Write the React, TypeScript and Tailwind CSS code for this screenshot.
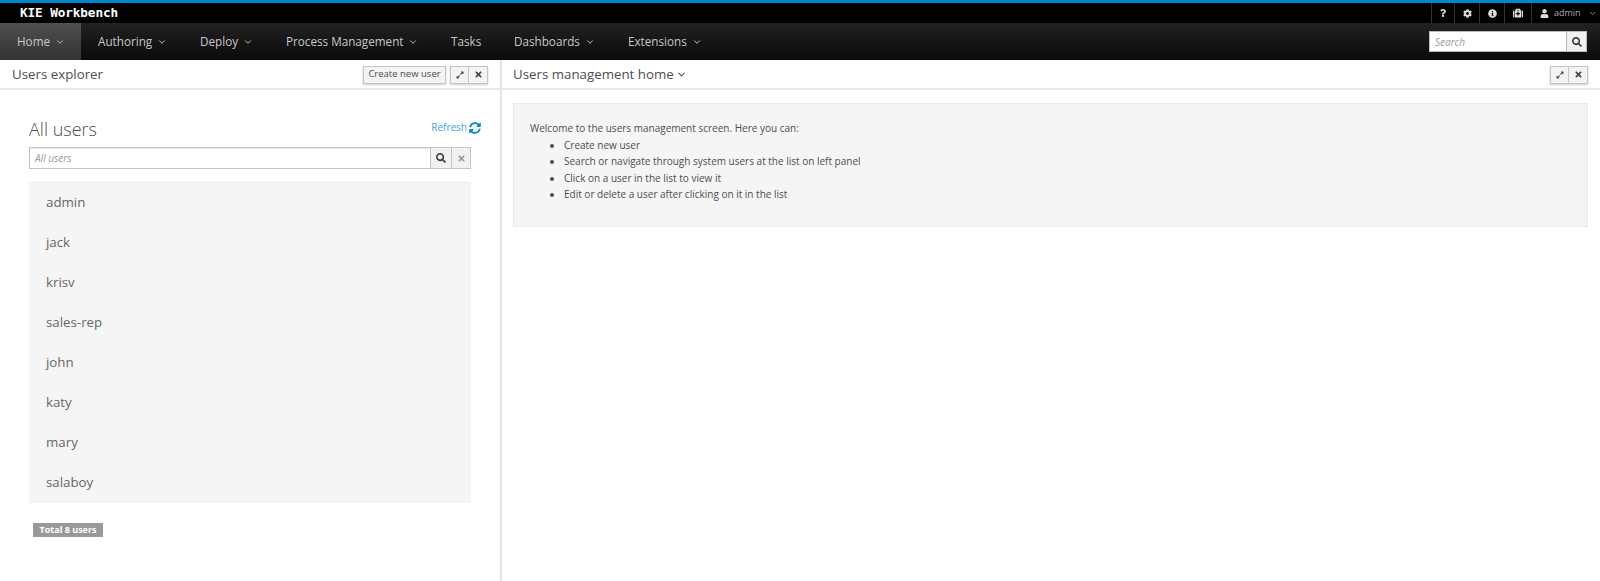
import { ChevronDown } from 'lucide-react';
import { FaCog, FaExpandAlt, FaInfoCircle, FaMedkit, FaQuestion, FaSearch, FaSyncAlt, FaTimes, FaUser } from 'react-icons/fa';

const navItems = [
  { label: 'Home', width: 'w-[81px]', active: true, caret: true },
  { label: 'Authoring', width: 'w-[102px]', caret: true },
  { label: 'Deploy', width: 'w-[86px]', caret: true },
  { label: 'Process Management', width: 'w-[165px]', caret: true },
  { label: 'Tasks', width: 'w-[63px]' },
  { label: 'Dashboards', width: 'w-[114px]', caret: true },
  { label: 'Extensions', width: 'w-[110px]', caret: true },
];

const users = ['admin', 'jack', 'krisv', 'sales-rep', 'john', 'katy', 'mary', 'salaboy'];

const PanelButtons = () => {
  return (
    <div className="flex h-[18px] border border-[#c4c4c4] bg-[#f3f3f3] shadow-[0_1px_2px_rgba(0,0,0,0.2)]">
      <div className="flex w-[18px] items-center justify-center border-r border-[#c4c4c4] text-[#444]">
        <FaExpandAlt className="text-[8px]" />
      </div>
      <div className="flex w-[18px] items-center justify-center text-[#444]">
        <FaTimes className="text-[9px]" />
      </div>
    </div>
  );
};

export default function App() {
  return (
    <div className="flex h-[581px] w-[1600px] flex-col overflow-hidden bg-white font-['Open_Sans',sans-serif] text-[#4d4d4d]">
      {/* Top utility bar */}
      <div className="flex h-[23px] items-center justify-between border-t-[3px] border-[#0088ce] bg-black">
        <span className="pl-5 font-['DejaVu_Sans_Mono',monospace] text-[12.7px] font-bold tracking-[-0.1px] text-white">KIE Workbench</span>
        <div className="flex h-full items-center text-[#ddd]">
          <div className="flex h-full w-[23px] items-center justify-center border-l border-[#333]">
            <FaQuestion className="text-[8px]" />
          </div>
          <div className="flex h-full w-[25px] items-center justify-center border-l border-[#333]">
            <FaCog className="text-[9px]" />
          </div>
          <div className="flex h-full w-[25px] items-center justify-center border-l border-[#333]">
            <FaInfoCircle className="text-[9px]" />
          </div>
          <div className="flex h-full w-[27px] items-center justify-center border-l border-[#333]">
            <FaMedkit className="text-[10px]" />
          </div>
          <div className="flex h-full w-[69px] items-center gap-[5px] border-l border-[#333] pl-[8px] text-[9px] text-[#aaa]">
            <FaUser className="text-[9px] text-[#ddd]" />
            <span>admin</span>
            <ChevronDown size={9} strokeWidth={2} className="ml-[2px]" />
          </div>
        </div>
      </div>

      {/* Main navigation */}
      <div className="flex h-[37px] items-stretch justify-between bg-gradient-to-b from-[#222] to-[#0a0a0a]">
        <div className="flex">
          {navItems.map((item) => (
            <div
              key={item.label}
              className={`flex items-center gap-[5px] pl-[17px] text-[11.7px] text-[#c8c8c8] ${item.width} ${item.active ? 'bg-gradient-to-b from-[#505050] to-[#333]' : ''}`}
            >
              <span>{item.label}</span>
              {item.caret && <ChevronDown size={10} strokeWidth={2.25} />}
            </div>
          ))}
        </div>
        <div className="flex items-center pr-[13px]">
          <div className="flex h-[21px] w-[158px] border border-[#bbb] bg-white">
            <span className="flex-1 pl-[5px] text-[10px] leading-[21px] text-[#999] italic">Search</span>
            <div className="flex w-[20px] items-center justify-center border-l border-[#bbb] bg-[#f1f1f1] text-[#333]">
              <FaSearch className="text-[10px]" />
            </div>
          </div>
        </div>
      </div>

      <div className="flex min-h-0 flex-1">
        {/* Left panel */}
        <div className="w-[502px] shrink-0 border-r-2 border-[#e4e4e4]">
          <div className="flex h-[30px] items-center justify-between border-b-2 border-[#e8e8e8] pt-[1px] pr-[12px] pl-[12px]">
            <span className="text-[13.3px]">Users explorer</span>
            <div className="flex items-center gap-[4px]">
              <div className="flex h-[18px] w-[83px] items-center justify-center border border-[#c4c4c4] bg-[#f3f3f3] text-[9.5px] text-[#4d4d4d] shadow-[0_1px_2px_rgba(0,0,0,0.2)]">
                Create new user
              </div>
              <PanelButtons />
            </div>
          </div>

          <div className="pr-[29px] pl-[29px]">
            <div className="flex h-[57px] items-end justify-between">
              <span className="pb-[4px] text-[18px] font-light">All users</span>
              <div className="mr-[-10px] flex items-center gap-[2px] self-start pt-[30px] text-[10px] text-[#39a5dc]">
                <span>Refresh</span>
                <FaSyncAlt className="text-[12px] text-[#0088ce]" />
              </div>
            </div>
            <div className="flex h-[22px] border border-[#c4c4c4] shadow-[inset_0_1px_1px_rgba(0,0,0,0.1)]">
              <span className="flex-1 pl-[5px] text-[10px] leading-[20px] text-[#999] italic">All users</span>
              <div className="flex w-[21px] items-center justify-center border-l border-[#c4c4c4] bg-[#f1f1f1] text-[#333]">
                <FaSearch className="text-[10px]" />
              </div>
              <div className="flex w-[19px] items-center justify-center border-l border-[#c4c4c4] bg-[#f1f1f1] text-[#999]">
                <FaTimes className="text-[9px]" />
              </div>
            </div>
            <div className="mt-[13px] border-t border-[#ececec]">
              {users.map((user) => (
                <div key={user} className="flex h-10 items-center border-b border-[#f1f1f1] bg-[#f5f5f5] pl-[17px] text-[13.3px] text-[#666] last:border-b-0">
                  {user}
                </div>
              ))}
            </div>
            <div className="mt-5 ml-[4px] flex h-[14px] w-[70px] items-center justify-center bg-[#999] text-[9px] font-bold text-white">
              Total 8 users
            </div>
          </div>
        </div>

        {/* Right panel */}
        <div className="min-w-0 flex-1">
          <div className="flex h-[30px] items-center justify-between border-b-2 border-[#e8e8e8] pt-[1px] pr-[12px] pl-[11px]">
            <div className="flex items-center gap-[2px] text-[13.3px]">
              <span>Users management home</span>
              <ChevronDown size={11} strokeWidth={2.25} />
            </div>
            <PanelButtons />
          </div>
          <div className="pt-[13px] pr-[12px] pl-[11px]">
            <div className="h-[124px] border border-[#ebebeb] bg-[#f5f5f5] pt-[16px] pl-[16px] text-[10px] leading-[16.5px]">
              <p>Welcome to the users management screen. Here you can:</p>
              <ul className="list-disc pl-[34px]">
                <li>Create new user</li>
                <li>Search or navigate through system users at the list on left panel</li>
                <li>Click on a user in the list to view it</li>
                <li>Edit or delete a user after clicking on it in the list</li>
              </ul>
            </div>
          </div>
        </div>
      </div>
    </div>
  );
}
